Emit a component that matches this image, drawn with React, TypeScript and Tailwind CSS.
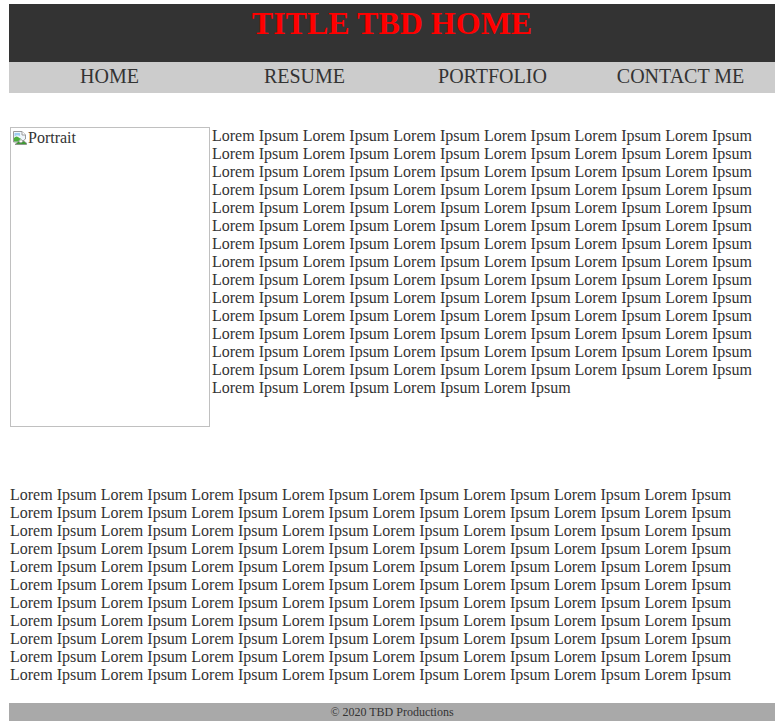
import React from 'react';

const LOREM = Array.from({ length: 88 }, () => 'Lorem Ipsum').join(' ');

function BrokenImageIcon() {
    return (
        <svg width="16" height="16" viewBox="0 0 16 16" className="shrink-0">
            <path d="M1.5 1.5 H10 L13.5 5 V9 L11 11 L9 9.5 L6 12 L1.5 12 Z" fill="#eef5fb" stroke="#9a9a9a" />
            <path d="M10 1.5 V5 H13.5" fill="#ffffff" stroke="#9a9a9a" />
            <path d="M2 8 Q4 5.5 6 7 T9 8.5 L6 11.5 H2 Z" fill="#4caf3c" />
            <path d="M2.5 3 H8 V6 Q5 4.5 2.5 6.5 Z" fill="#9fcdf0" />
            <path d="M3 14.5 L6.5 11.5 L9 13 L11.5 11 L14.5 13 V14.5 Z" fill="#3d9a31" stroke="#8a8a8a" strokeWidth="0.8" />
        </svg>
    );
}

export default function App() {
    return (
        <div className="pt-[4px] pl-[9px] pr-[8px] pb-[3px] bg-white text-[#333] font-['Times_New_Roman','Liberation_Serif',serif]">
            {/* Header */}
            <header className="h-[58px] bg-[#333] text-center pt-[1px]">
                <h1 className="text-[32px] leading-[37px] font-bold text-[#ff0000]">TITLE TBD HOME</h1>
            </header>

            {/* Navigation */}
            <nav className="h-[31px] bg-[#ccc] pt-[3px]">
                <ul className="flex text-[20px] leading-[23px] text-[#333] whitespace-nowrap">
                    <li className="ml-[71px]">HOME</li>
                    <li className="ml-[125px]">RESUME</li>
                    <li className="ml-[93px]">PORTFOLIO</li>
                    <li className="ml-[70px]">CONTACT ME</li>
                </ul>
            </nav>

            {/* Main content */}
            <main className="mt-[34px] text-[16px] leading-[18px]">
                <section className="flex items-start">
                    <div className="ml-[1px] w-[200px] h-[300px] shrink-0 border border-[#c0c0c0] flex items-start">
                        <div className="ml-[1px] mt-[2px]">
                            <BrokenImageIcon />
                        </div>
                        <span className="text-[#333] mt-[1px]">Portrait</span>
                    </div>
                    <p className="ml-[2px] flex-1">{LOREM}</p>
                </section>

                <p className="mt-[59px] ml-[1px]">{LOREM}</p>
            </main>

            {/* Footer */}
            <footer className="mt-[19px] h-[18px] bg-[#a9a9a9] text-center text-[12px] leading-[14px] pt-[2px] text-[#333]">
                © 2020 TBD Productions
            </footer>
        </div>
    );
}
